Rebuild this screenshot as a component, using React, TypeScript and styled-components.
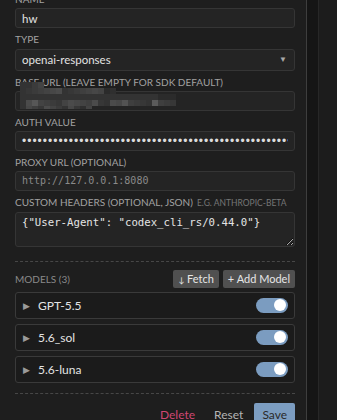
import React from 'react';
import styled, { createGlobalStyle } from 'styled-components';

const GlobalStyle = createGlobalStyle`
  html, body {
    margin: 0;
    padding: 0;
    background: #1c1c1c;
    overflow: hidden;
  }
  body {
    font-family: Lato, 'Open Sans', sans-serif;
  }
`;

const models = ['GPT-5.5', '5.6_sol', '5.6-luna'];

// pixelated blur over the base url, drawn cell by cell
const mosaicRows = [4, 16, 26, 26, 12];
const Mosaic: React.FC = () => {
  const cells: React.ReactNode[] = [];
  mosaicRows.forEach((count, r) => {
    for (let c = 0; c < count; c++) {
      const v = (c * 37 + r * 91 + c * r * 13) % 7;
      const light = r === 3 && c % 5 === 2 ? 16 : 0;
      const fade = c > count - 4 ? -8 : 0;
      const g = 0x33 + v * 4 + light + fade;
      const hex = g.toString(16).padStart(2, '0');
      cells.push(
        <rect key={`${r}-${c}`} x={c * 6} y={r * 6} width={6} height={r === 4 ? 3 : 6} fill={`#${hex}${hex}${hex}`} />
      );
    }
  });
  return (
    <Redaction width={156} height={27} viewBox="0 0 156 27">
      {cells}
    </Redaction>
  );
};

const App: React.FC = () => {
  return (
    <>
      <GlobalStyle />
      <Page>
        <Panel>
          <Form>
            <Field>
              <Label>Name</Label>
              <Input defaultValue="hw" />
            </Field>
            <Field>
              <Label>Type</Label>
              <SelectWrap>
                <Select defaultValue="openai-responses">
                  <option value="openai-responses">openai-responses</option>
                  <option value="anthropic">anthropic</option>
                </Select>
              </SelectWrap>
            </Field>
            <Field $redacted>
              <Label>Base URL (leave empty for SDK default)</Label>
              <Input defaultValue="" />
              <Mosaic />
            </Field>
            <Field>
              <Label>Auth Value</Label>
              <Password type="password" defaultValue={'x'.repeat(70)} />
            </Field>
            <Field>
              <Label>Proxy URL (optional)</Label>
              <Input $mono placeholder="http://127.0.0.1:8080" />
            </Field>
            <Field>
              <Label>
                Custom Headers (optional, JSON)<Hint>e.g. anthropic-beta</Hint>
              </Label>
              <TextArea defaultValue={'{"User-Agent": "codex_cli_rs/0.44.0"}'} />
            </Field>
          </Form>

          <Divider $top={14} $bottom={8} />

          <ModelsHeader>
            <ModelsLabel>Models (3)</ModelsLabel>
            <HeaderButtons>
              <SmallButton>
                <Arrow>↓</Arrow> Fetch
              </SmallButton>
              <SmallButton>+ Add Model</SmallButton>
            </HeaderButtons>
          </ModelsHeader>

          <ModelList>
            {models.map((m) => (
              <ModelRow key={m}>
                <Caret>▶</Caret>
                <ModelName>{m}</ModelName>
                <Toggle>
                  <Knob />
                </Toggle>
              </ModelRow>
            ))}
          </ModelList>

          <Divider $top={10} $bottom={9} />

          <Actions>
            <TextButton $color="#cf4672">Delete</TextButton>
            <TextButton $color="#b4b4b4">Reset</TextButton>
            <SaveButton>Save</SaveButton>
          </Actions>
        </Panel>
        <Gutter />
        <Rest />
      </Page>
    </>
  );
};

const Page = styled.div`
  display: flex;
  height: 420px;
  overflow: hidden;
`;

const Panel = styled.div`
  width: 307px;
  box-sizing: border-box;
  flex-shrink: 0;
  padding: 0 11px 0 15px;
  background: #1e1e1e;
  border-right: 1px solid #3e3e3e;
  display: flex;
  flex-direction: column;
`;

const Gutter = styled.div`
  width: 12px;
  flex-shrink: 0;
  box-sizing: border-box;
  background: #151515;
  border-right: 1px solid #272727;
`;

const Rest = styled.div`
  flex: 1;
  background: #1c1c1c;
`;

const Form = styled.div`
  display: flex;
  flex-direction: column;
  gap: 5px;
  margin-top: -7px;
`;

const Field = styled.div<{ $redacted?: boolean }>`
  display: flex;
  flex-direction: column;
  position: ${({ $redacted }) => ($redacted ? 'relative' : 'static')};
`;

const Label = styled.label`
  font-size: 10px;
  line-height: 12px;
  text-transform: uppercase;
  color: #a2a2a2;
  margin-bottom: 3px;
  white-space: nowrap;
`;

const Hint = styled.span`
  font-size: 8.5px;
  color: #767676;
  margin-left: 4px;
`;

const Input = styled.input<{ $mono?: boolean }>`
  height: 20px;
  box-sizing: border-box;
  background: #242424;
  border: 1px solid #353535;
  border-radius: 3px;
  padding: 0 6px;
  color: #e2e2e2;
  font-family: ${({ $mono }) => ($mono ? "'DejaVu Sans Mono', monospace" : "Lato, sans-serif")};
  font-size: ${({ $mono }) => ($mono ? '10px' : '11.5px')};
  outline: none;
  &::placeholder {
    color: #8a8a8a;
  }
`;

const Password = styled(Input)`
  font-family: 'Liberation Sans', Arial, sans-serif;
  font-size: 12px;
  letter-spacing: 1px;
  color: #dcdcdc;
`;

const SelectWrap = styled.div`
  position: relative;
  &::after {
    content: '▼';
    position: absolute;
    right: 8px;
    top: 6px;
    font-size: 8px;
    color: #a8a8a8;
    pointer-events: none;
  }
`;

const Select = styled.select`
  width: 100%;
  height: 22px;
  box-sizing: border-box;
  appearance: none;
  background: #242424;
  border: 1px solid #353535;
  border-radius: 3px;
  padding: 0 6px;
  color: #e2e2e2;
  font-family: Lato, sans-serif;
  font-size: 11.5px;
  outline: none;
`;

const TextArea = styled.textarea`
  height: 35px;
  box-sizing: border-box;
  resize: vertical;
  background: #242424;
  border: 1px solid #353535;
  border-radius: 3px;
  padding: 3px 6px;
  color: #e4e4e4;
  font-family: 'DejaVu Sans Mono', monospace;
  font-size: 10.7px;
  line-height: 14px;
  outline: none;
`;

const Redaction = styled.svg`
  position: absolute;
  left: 5px;
  top: 6px;
  display: block;
`;

const Divider = styled.div<{ $top: number; $bottom: number }>`
  border-top: 1px dashed #474747;
  margin: ${({ $top, $bottom }) => `${$top}px 0 ${$bottom}px`};
`;

const ModelsHeader = styled.div`
  display: flex;
  align-items: center;
  justify-content: space-between;
  height: 18px;
`;

const ModelsLabel = styled.span`
  font-size: 10px;
  text-transform: uppercase;
  color: #8a8a8a;
`;

const HeaderButtons = styled.div`
  display: flex;
  gap: 4px;
`;

const SmallButton = styled.button`
  height: 18px;
  padding: 0 5px;
  border: none;
  border-radius: 2px;
  background: #505050;
  color: #e6e6e6;
  font-family: Lato, sans-serif;
  font-size: 11px;
  cursor: pointer;
`;

const Arrow = styled.span`
  font-size: 8px;
`;

const ModelList = styled.div`
  display: flex;
  flex-direction: column;
  gap: 5px;
  margin-top: 4px;
`;

const ModelRow = styled.div`
  height: 27px;
  box-sizing: border-box;
  display: flex;
  align-items: center;
  padding: 0 6px 0 7px;
  border: 1px solid #3a3a3a;
  border-radius: 3px;
  background: #1b1b1b;
`;

const Caret = styled.span`
  width: 15px;
  font-size: 9px;
  color: #9a9a9a;
`;

const ModelName = styled.span`
  flex: 1;
  font-size: 12px;
  color: #e4e4e4;
`;

const Toggle = styled.div`
  width: 32px;
  height: 15px;
  box-sizing: border-box;
  border-radius: 8px;
  background: #7b9cc0;
  display: flex;
  align-items: center;
  justify-content: flex-end;
  padding: 0 2px;
`;

const Knob = styled.div`
  width: 12px;
  height: 12px;
  border-radius: 50%;
  background: #ffffff;
`;

const Actions = styled.div`
  display: flex;
  justify-content: flex-end;
  align-items: center;
  gap: 3px;
`;

const TextButton = styled.button<{ $color: string }>`
  height: 24px;
  padding: 0 8px;
  border: none;
  background: none;
  color: ${({ $color }) => $color};
  font-family: Lato, sans-serif;
  font-size: 12px;
  cursor: pointer;
`;

const SaveButton = styled.button`
  height: 24px;
  padding: 0 8px;
  border: none;
  border-radius: 2px;
  background: #7c9dc1;
  color: #2a2a2a;
  font-family: Lato, sans-serif;
  font-size: 12px;
  cursor: pointer;
`;

export default App;
